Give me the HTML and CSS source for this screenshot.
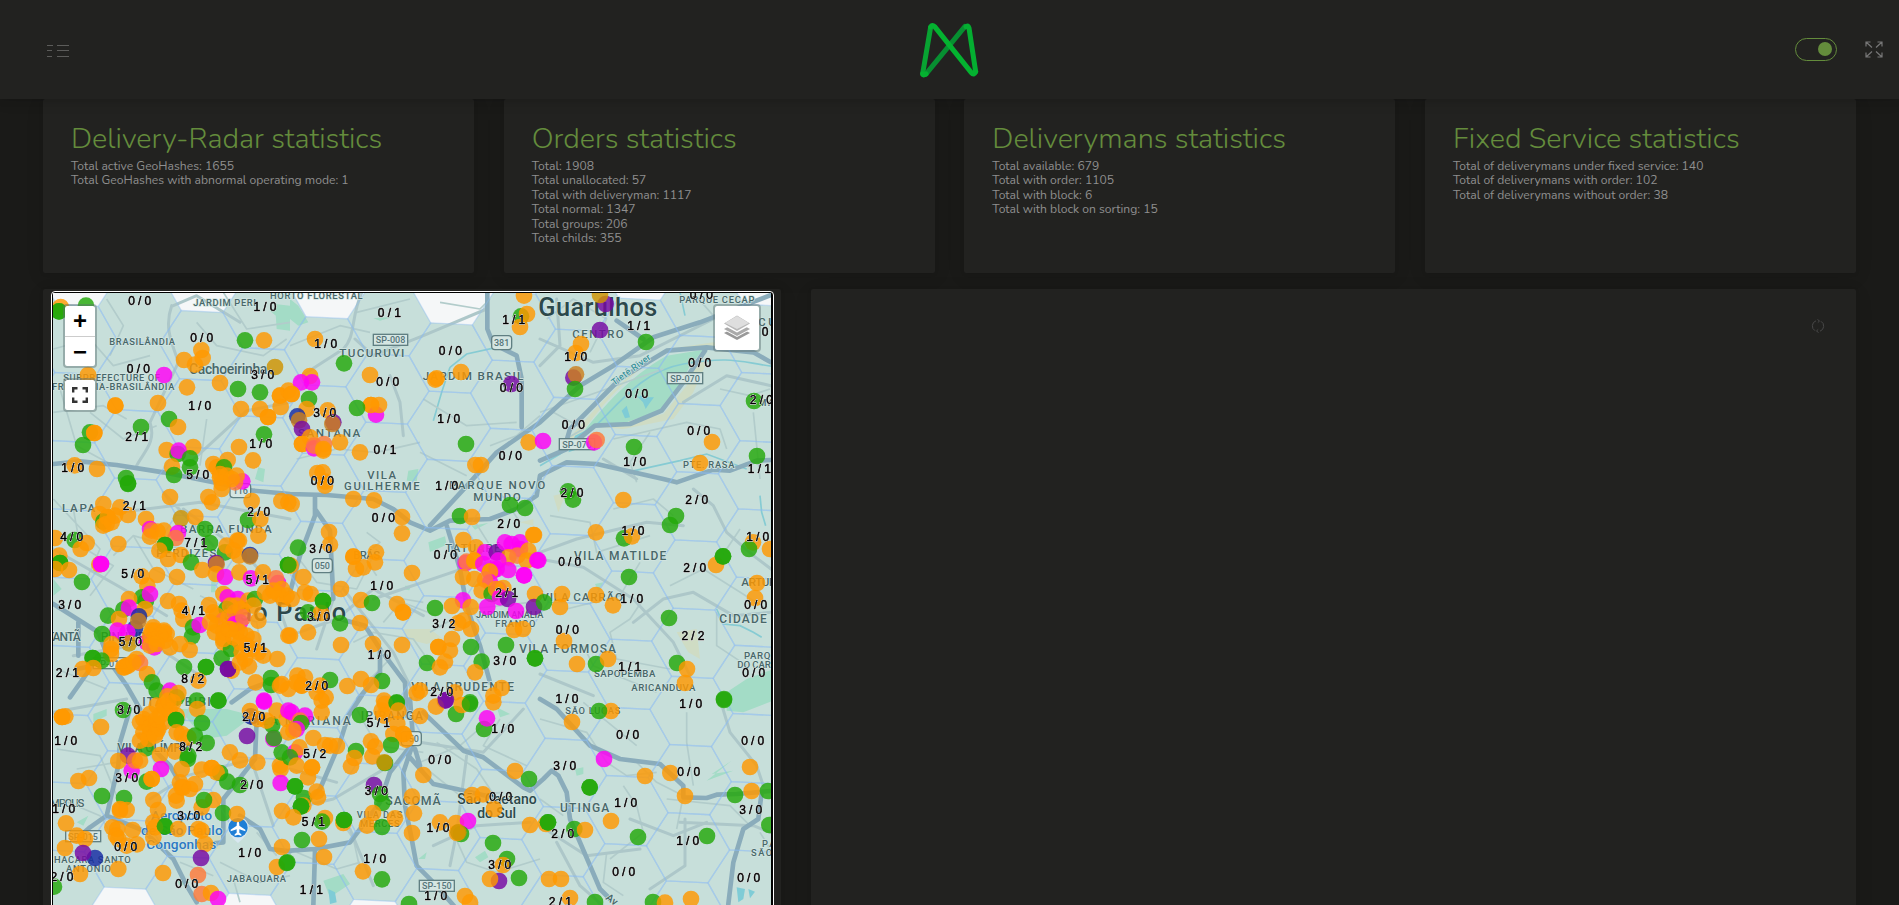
FILE: index.html
```html
<!DOCTYPE html>
<html lang="en">
<head>
<meta charset="utf-8">
<title>Delivery radar</title>
<link rel="stylesheet" href="styles.css">
</head>
<body>
<header class="topbar">
  <svg class="icon-menu" width="24" height="16" viewBox="0 0 24 16"><path d="M1 3.500h6M11 3.500h12M1 8.500h5M11 8.500h12M1 14.500h5M11 14.500h12"/></svg>
  <svg class="logo" width="60" height="58" viewBox="0 0 180 174">
    <path d="M135 19 L17 163" stroke="#078f31"/>
    <path d="M8 161 L32 21" stroke="#08a332"/>
    <path d="M138 20 Q144 14 147 24 L167 155" stroke="#04ae31"/>
    <path d="M8 161 Q9 168 18 162" stroke="#04b230"/>
    <path d="M32 21 Q36 13 44 20 L154 158 Q162 168 167 155" stroke="#04b230"/>
  </svg>
  <div class="topbar-actions">
    <span class="toggle"><i></i></span>
    <svg class="icon-full" width="18" height="17" viewBox="0 0 18 17"><path d="M1 5.500V1h4.500M1 1l6 5.500M12.500 1H17v4.500M17 1l-6 5.500M1 11.500V16h4.500M1 16l6-5.500M12.500 16H17v-4.500M17 16l-6-5.500"/></svg>
  </div>
</header>
<main class="page">
  <section class="stats">
    <article class="card stat"><h2>Delivery-Radar statistics</h2>
      <p>Total active GeoHashes: 1655</p><p>Total GeoHashes with abnormal operating mode: 1</p></article>
    <article class="card stat"><h2>Orders statistics</h2>
      <p>Total: 1908</p><p>Total unallocated: 57</p><p>Total with deliveryman: 1117</p><p>Total normal: 1347</p><p>Total groups: 206</p><p>Total childs: 355</p></article>
    <article class="card stat"><h2>Deliverymans statistics</h2>
      <p>Total available: 679</p><p>Total with order: 1105</p><p>Total with block: 6</p><p>Total with block on sorting: 15</p></article>
    <article class="card stat"><h2>Fixed Service statistics</h2>
      <p>Total of deliverymans under fixed service: 140</p><p>Total of deliverymans with order: 102</p><p>Total of deliverymans without order: 38</p></article>
  </section>
  <section class="panels">
    <div class="card map-card">
      <div class="map">
        <svg id="map" width="718" height="620" viewBox="159 882 2154 1860"></svg>
        <div class="zoom"><span>+</span><span>−</span></div>
        <div class="fit"><svg width="16" height="16" viewBox="0 0 16 16"><path d="M1.200 5.500V1.200H5.500M10.500 1.200h4.300v4.300M14.800 10.500v4.300h-4.300M5.500 14.800H1.200v-4.300"/></svg></div>
        <div class="layers"><svg width="26" height="26" viewBox="0 0 26 26"><path d="M0 18l13-7 13 7-13 7z" fill="#999"/><path d="M0 15l13-7 13 7-13 7z" fill="#fff"/><path d="M0 14l13-7 13 7-13 7z" fill="#aaa"/><path d="M0 10.500l13-7 13 7-13 7z" fill="#fff"/><path d="M0 8.500l13-8 13 8-13 7.500z" fill="#b9b9b9"/><path d="M1 8l12-7 12 7-12 6z" fill="#dedede"/></svg></div>
      </div>
    </div>
    <div class="card side">
      <svg class="icon-refresh" width="14" height="14" viewBox="0 0 14 14"><path d="M5 1.800A5.500 5.500 0 0 0 4 11.700M9 12.200A5.500 5.500 0 0 0 10 2.300M6.500 .5L8.500 2 6.800 3.600M7.500 13.500L5.500 12l1.700-1.600"/></svg>
    </div>
  </section>
</main>
<script src="map.js"></script>
</body>
</html>
```
FILE: styles.css
```css
* { box-sizing: border-box; }
body { margin: 0; height: 905px; overflow: hidden; background: #1a1a18; font-family: "Nunito", "Lato", sans-serif; color: #8f8f8f; }
.topbar { position: relative; z-index: 5; height: 99px; background: #222220; box-shadow: 0 1px 15px rgba(0,0,0,.1), 0 1px 8px rgba(0,0,0,.1); display: grid; grid-template-columns: 1fr 60px 1fr; align-items: center; padding: 0 16px 0 46px; }
.topbar svg { fill: none; display: block; }
.icon-menu { stroke: #5c5c5a; stroke-width: 1; }
.topbar .logo { stroke-width: 15; stroke-linecap: round; stroke-linejoin: round; margin: -1px 0 0 -15px; }
.topbar-actions { display: flex; justify-content: flex-end; align-items: center; gap: 28px; padding-bottom: 1px; }
.toggle { width: 42px; height: 23px; border: 1px solid #648c3c; border-radius: 12px; display: flex; justify-content: flex-end; align-items: center; padding-right: 4px; }
.toggle i { width: 14px; height: 14px; border-radius: 50%; background: #648c3c; }
.icon-full { stroke: #777; stroke-width: 1.2; }
.page { padding: 0 43px; }
.stats { display: grid; grid-template-columns: repeat(4, 431px); justify-content: space-between; height: 174px; }
.card { background: #222220; border-radius: 2px; box-shadow: 0 4px 20px 1px rgba(0,0,0,.06), 0 1px 4px rgba(0,0,0,.08); }
.stat { padding: 20px 28px; }
.stat h2 { margin: 0; height: 40px; font-size: 28.8px; line-height: 39px; font-weight: 300; color: #648c3c; white-space: nowrap; }
.stat p { margin: 0; font-size: 12.13px; line-height: 14.4px; white-space: nowrap; }
.panels { display: flex; gap: 30px; margin-top: 16px; }
.map-card { width: 738px; height: 660px; padding: 2px 7px 0 8px; }
.map { position: relative; width: 723px; height: 650px; border: 1px solid #fff; border-radius: 4px; background: #000; padding: 1px; overflow: hidden; }
#map { display: block; }
.zoom, .fit, .layers { position: absolute; background: #fff; border: 2px solid rgba(90,110,110,.45); background-clip: padding-box; border-radius: 4px; }
.zoom { left: 11px; top: 12px; width: 34px; font: bold 24px/29px "Liberation Sans", sans-serif; color: #000; text-align: center; }
.zoom span { display: block; height: 30px; }
.zoom span + span { border-top: 1px solid #ccc; }
.fit { left: 11px; top: 86px; width: 34px; height: 34px; display: grid; place-items: center; }
.fit path { fill: none; stroke: #333; stroke-width: 2.400; }
.layers { right: 12px; top: 12px; width: 48px; height: 48px; display: grid; place-items: center; }
.side { width: 1045px; height: 660px; padding: 30px 31px; display: flex; justify-content: flex-end; }
.icon-refresh { fill: none; stroke: #484848; stroke-width: 1; }

.hex { fill: #c7dfda; }
.hex-line { fill: none; stroke: #8bbcf0; stroke-width: 4; stroke-opacity: .4; }
.park { fill: #a3dcc6; }
.sand { fill: #cfdcc4; }
.water { fill: none; stroke: #86cbd3; stroke-width: 5; }
.lake { fill: #7fccd6; }
.street { fill: none; stroke: #b2cccb; stroke-width: 5; stroke-linejoin: round; }
.avenue { fill: none; stroke: #adc7c9; stroke-width: 9; stroke-linejoin: round; stroke-linecap: round; }
.highway { fill: none; stroke: #8aacbb; stroke-width: 14; stroke-linejoin: round; stroke-linecap: round; }
.place { font-family: "Roboto", sans-serif; fill: #486769; font-weight: 500; stroke: #d3e6e2; stroke-width: 4; paint-order: stroke; }
.place.city { fill: #2c484b; }
.place.airport { fill: #2b79c4; }
.shield { fill: #d5e6e3; stroke: #607f82; stroke-width: 4; }
.shield-text { font: 500 27px "Roboto", sans-serif; fill: #55757a; }
.dot { fill-opacity: .82; }
.count { font: 36px "Liberation Sans", sans-serif; fill: #000; stroke: #000; stroke-width: 1.6; text-anchor: middle; filter: drop-shadow(0 0 2px #fff) drop-shadow(0 0 2px #fff) drop-shadow(0 0 1px #fff); }
```
FILE: map.js
```js
const svg = document.getElementById('map');
const NS = 'http://www.w3.org/2000/svg';
const add = (tag, attrs, text) => {
  const el = document.createElementNS(NS, tag);
  for (const k in attrs) el.setAttribute(k, attrs[k]);
  if (text !== undefined) el.textContent = text;
  svg.appendChild(el);
  return el;
};
// Origins of the nine map sectors.
const origins = [[120,840],[870,840],[1620,840],[120,1470],[870,1470],[1620,1470],[120,2100],[870,2100],[1620,2100]];

// Hexagonal service cells on a sheared lattice.
const empty = ['0,-1','-2,0','-4,1','-6,2','3,-3','5,-4','-5,11','-3,10','-1,9'];
const U = [184.5, 111.6], V = [-5.2, 204.6], C = [1352, 1077];
add('rect', {x: 150, y: 870, width: 2180, height: 1880, fill: '#f5f7f8'});
const cells = [];
for (let i = -8; i < 8; i++) for (let j = -12; j < 16; j++) {
  if (empty.includes(i + ',' + j)) continue;
  const x = C[0] + i * U[0] + j * V[0], y = C[1] + i * U[1] + j * V[1];
  if (x < 0 || x > 2450 || y < 780 || y > 2850) continue;
  cells.push([[1,1],[-1,2],[-2,1],[-1,-1],[1,-2],[2,-1]]
    .map(([a, b]) => (x + (a*U[0] + b*V[0]) / 3).toFixed(1) + ',' + (y + (a*U[1] + b*V[1]) / 3).toFixed(1)).join(' '));
}
cells.forEach(points => add('polygon', {class: 'hex', points}));

// [sector, class, path]
const shapes = [
  [0,'park','M705 75l45 5v75l-40-5zM655 565l20 5-5 40-25-10zM690 95l40-10-5 40z'],
  [1,'park','M0 60l25 20 30 50-30 10-25-20zM355 575l30-5-5 40-30-5zM250 118l60-5-40 12z'],
  [2,'sand','M100 500 C170 390 300 240 420 205 L520 190 590 200 480 205 380 215 C270 270 160 390 60 510zM180 445 L370 405 440 320 470 240 500 250 460 340 400 420 250 450z'],
  [2,'park','M100 500 C170 400 270 290 380 230 L490 212 450 260 420 320 370 390 260 430 160 440z'],
  [2,'lake','M105 470l40-20-30 60-30 10zM245 395l15-15 10 35-15 3zM290 350l8 5 12-20 2 20 30 0-15 20-10 15-8-20z'],
  [3,'park','M515 240l12 0 0 70-14 0zM40 270l25 30-25 20z'],
  [4,'park','M415 160l50-18 5 25-50 22zM545 110l50-8-40 20zM345 290l18 0-5 14-12-2z'],
  [4,'sand','M340 420l80 0 40 30-50 15-60-15zM690 100l40-10 0 20z'],
  [5,'park','M165 285l25-5-15 25zM560 610l60-40 80-30v90H560z'],
  [5,'sand','M410 430l60-10 10 90-35-20zM40 20l40-10-25 60z'],
  [6,'park','M420 30l140 0 80 20-80 60-70 10zM160 45l40-15 0 20-40 20zM110 370l35-20-15 30zM410 540l40 10-30 10z'],
  [6,'sand','M510 400l40 0-10 50-40 0zM450 190l60 20-50 15z'],
  [7,'park','M100 545l60-20 20 30-60 40zM555 475l30-20 10 20-25 15zM385 480l25-20-5 20zM620 25l40 20-30 10z'],
  [8,'park','M560 0h140v5l-90 35-50-5zM105 210l25-5 0 20-20 5zM500 245l75-60-60 40 65-10z'],
  [8,'lake','M590 565l25 5-5 30-15 10zM625 570l20 8-15 20z'],
  [7,'lake','M115 570l20 10 5 30-20 5z'],
  [2,'water','M0 560 L60 525 130 470 C200 430 280 280 430 255 S600 250 700 262M420 40l15 70M260 580l160-35 80-20 120 45'],
  [1,'water','M480 265 L530 225 620 205M480 265 l-25 75-25 85'],
  [5,'water','M660 20l5 50 12 40M530 360l20 45 50 5 40 20 25 15'],
  [0,'street','M40 210 L150 180 220 260 330 230M470 130 L530 200 670 230 740 180M40 400 L190 380 260 420M500 420 L480 560M60 330 L110 500 220 560M200 60l50 80-40 90M550 40l70 110 130-20M150 400l100 80 100-40'],
  [1,'street','M0 200 L150 140 240 160M400 360 L530 440 680 430M200 100 L360 60M20 540 L140 510 260 520 390 490M390 520L530 590M600 500l80-30 70-60M450 70l120 20 30-30'],
  [2,'street','M0 400l200-70 170-60M220 480 L440 430 540 450 560 510M20 120l80-60 100 60-50 100M540 330l90 20 60-20M450 30l70 80M0 430l40-30 90 50-70 40M640 400l20 200M330 460l-60 90 20 60'],
  [3,'street','M40 30 L180 180 140 270M280 140l60 100 120 60M100 60l20 110 100 60-70 90M480 320 L650 400 670 520M50 540l150 60M220 200l60-60 140 40'],
  [4,'street','M20 200l60 80 120 20 60-120M230 130l40 30-50 40 40 60M260 310l180 70M280 400l60-70 60 10M420 430l120-70 180-20M250 450l50 60-70 70M550 90l50 80 140 30M630 10l60 90M190 460l60-30 120 20 70 100'],
  [5,'street','M30 80l120 20 20 90 160-50M220 60l120-30 60 50M80 360l160-40 60-100M310 330l-40 60-60 40 20 80 160 30M130 470l30 60 190 80M390 290l100-50 190 120M530 370v100l90 60M600 120l-60 90'],
  [6,'street','M50 150l130 20 50 120M60 300l120 50 60 100M420 490l100 40M540 490l120 60 90-20M450 20l-40 110M650 400l60 70M110 210l120-20M580 540l20 70'],
  [7,'street','M20 460l120 50 70-20M200 30l60 110 140 20M410 210l100 80 130-10M390 190l120-50 80-70M480 380l50 110 90 30 130-40M630 60l-50 80 130 60M150 360l40 60 20 90M440 130l120 80 80 120'],
  [8,'street','M0 60l140 40 60 90 60 40 90-10M250 260l40 60 20 80-100 80M440 40l0 90 20 130M290 190l60 60 80 40-20 100M200 460l-10 90 60 40M660 400l30 50M130 10l160 130M380 300l190 20 60 60M0 300l70 50'],
  [0,'avenue','M395 80 C370 150 400 200 415 250 L330 430 C350 490 310 520 290 560M440 560 L620 395 750 370M400 80 L470 50 600 130'],
  [1,'avenue','M220 30 C180 110 200 170 160 210 L20 300M300 290 L330 370 340 470M195 180 L250 230 400 170 590 90'],
  [2,'avenue','M50 60 L60 200 0 260M0 180 L160 250 300 230 520 120M430 370 L560 290 693 320M190 540 L290 600'],
  [3,'avenue','M40 180 L250 300 380 380M430 60 L620 200 690 280 740 420M370 10 L520 170M100 500 L330 460 480 560M240 70 L480 40 750 90'],
  [4,'avenue','M120 120 L130 330 80 480M250 330 L530 235 750 190M0 440 L140 390 250 300 400 380M160 300 L310 490 380 630'],
  [5,'avenue','M0 190 L110 150 320 100 430 110M460 0 L520 50 560 130 640 200 693 240M0 210 L130 235 280 330 400 460 450 560M280 400 L370 330 460 310 580 380 693 370M0 555 L160 620'],
  [6,'avenue','M40 40 L260 0M330 300 L440 230 640 180M640 200 L700 380'],
  [7,'avenue','M0 330 L130 300 300 200M430 440 L560 380 720 370M390 130 L580 160 700 30M530 170 L500 400 480 500M180 390 L250 560M0 210L140 250'],
  [8,'avenue','M540 0 L570 100 650 200 670 260M50 430 L120 560 200 630M0 380 L140 470 300 450M420 370 L640 380 690 400M435 360 L435 500 330 570M270 360 L400 410 500 370'],
  [1,'highway','M592 30 V150 L610 195 680 230 695 300 695 360 695 445'],
  [3,'highway','M40 -75 L120 -83 230 -72 370 -50 520 -20 640 5 750 15 860 18 1000 30 1060 60 1110 100 1170 125 1230 95 1350 90 1430 60 1490 20 1500 -40 1580 -80 1670 -75 1870 -30 1910 -20 2020 -58 2070 -55 2150 -85 2260 -90'],
  [4,'highway','M420 110 L540 -20 620 -110 750 -200 870 -310 970 -370 1090 -455 1230 -500 1443 -582M980 -505 L1060 -450M75 25 L75 80 30 200 0 310M75 60L120 125 130 330M470 110 L510 240 530 350 570 470 600 580'],
  [2,'highway','M78 490 L90 450 240 300 380 215 500 205 640 220 693 250M0 545 L80 510 165 440 270 435 365 395 430 310 495 215'],
  [3,'highway','M40 345 L120 395 175 430 210 520 260 590 300 660M115 400V500M150 540L90 625M190 525L110 540M575 640L630 600 710 570'],
  [4,'highway','M150 390 L225 410 270 480 270 550 205 630M285 500 L345 580 350 680'],
  [6,'highway','M270 30 L240 130 235 200 200 350 150 385 110 420M200 350 L310 395 400 480 440 560 470 610M650 60 L645 180 550 300 550 430 500 435M600 350 L660 390 690 450 750 457M300 110 L390 200 430 270'],
  [7,'highway','M215 -10 L175 50 150 130 90 270 60 300M360 0 L370 130 340 220 345 320 365 420 380 500 430 550 500 630M0 455 L75 450 180 430 270 310 300 220 370 130M75 455 L70 620M355 170 L430 255 500 270 630 300M400 40 L520 155 580 175 700 265 720 275 760 240 785 215 805 230 830 280 840 360 900 500 930 570 960 600M375 150 L390 200'],
  [8,'highway','M0 0 L50 30 150 140 240 180 360 195 430 260 430 295 500 297 530 287 590 285 690 276M665 280 L655 360 610 390 580 490 565 615']
];
for (const [s, cls, d] of shapes) add('path', {class: cls, d, transform: `translate(${origins[s]})`});
cells.forEach(points => add('polygon', {class: 'hex-line', points}));

// [sector, left, baseline, width, size, text, kind]
const places = [
  [0,460,80,188,28,'JARDIM PERI'],[0,690,61,278,28,'HORTO FLORESTAL'],[0,208,199,197,28,'BRASILÂNDIA'],[0,447,285,235,42,'Cachoeirinha'],
  [0,70,307,290,28,'SUBPREFECTURE OF'],[0,36,334,367,28,'FREGUESIA-BRASILÂNDIA'],
  [1,148,235,195,35,'TUCURUVI'],[1,398,303,302,35,'JARDIM BRASIL'],[1,24,474,187,35,'SANTANA'],[1,232,600,86,34,'VILA'],[1,162,632,227,34,'GUILHERME'],[1,478,629,288,35,'PARQUE NOVO'],
  [2,-5,111,357,76,'Guarulhos','city'],[2,97,177,154,34,'CENTRO'],[2,418,73,225,28,'PARQUE CECAP'],[2,655,142,90,34,'CUM'],[2,429,568,154,28,'PTE. RASA'],[2,655,380,70,28,'MAR'],
  [3,66,70,100,35,'LAPA'],[3,420,131,275,35,'BARRA FUNDA'],[3,349,205,180,34,'PERDIZES'],[3,545,396,373,76,'São Paulo','city'],[3,-20,456,142,36,'BUTANTÃ'],[3,182,456,180,36,'PINHEIROS'],
  [4,550,35,142,35,'MUNDO'],[4,466,190,165,34,'TATUAPÉ'],[4,190,211,80,34,'BRÁS'],[4,558,388,202,28,'JARDIM ANÁLIA'],[4,616,414,120,28,'FRANCO'],[4,364,606,308,36,'VILA PRUDENTE'],
  [5,102,214,277,36,'VILA MATILDE'],[5,4,336,245,35,'VILA CARRÃO'],[5,604,292,170,35,'ARTUR ALV'],[5,538,402,142,36,'CIDADE'],[5,612,510,100,29,'PARQU'],[5,592,537,145,29,'DO CARMO'],[5,-62,492,290,36,'VILA FORMOSA'],[5,162,565,184,29,'SAPOPEMBA'],[5,274,607,192,29,'ARICANDUVA'],
  [6,307,22,205,36,'ITAIM BIBI'],[6,232,160,225,36,'VILA OLÍMPIA'],[6,-50,324,183,34,'MORUMPOLIS'],[6,22,492,250,28,'CHACARA SANTO'],[6,78,520,135,28,'ANTONIO'],[6,333,364,183,41,'Aeroporto','airport'],[6,303,408,245,41,'de São Paulo','airport'],[6,319,450,210,41,'Congonhas','airport'],[6,560,550,178,28,'JABAQUARA'],
  [6,620,79,312,36,'VILA MARIANA'],[7,212,64,187,36,'IPIRANGA'],[7,286,319,166,37,'SACOMÃ'],[7,200,357,137,28,'VILA DAS'],[7,210,384,119,28,'MERCES'],[7,502,316,238,42,'São Caetano','city'],[7,562,358,116,42,'do Sul','city'],
  [8,76,46,165,28,'SÃO LUCAS'],[8,60,340,148,36,'UTINGA'],[8,666,445,90,28,'PARQ'],[8,633,472,120,28,'SÃO RA']
];
for (const [s, x, y, w, size, text, kind = ''] of places)
  add('text', {class: 'place ' + kind, x: origins[s][0] + x, y: origins[s][1] + y, 'font-size': size, textLength: w}, text);
add('text', {class: 'place', 'font-size': 28, style: 'fill:#3c939c', transform: 'translate(1843 1160) rotate(-36)', textLength: 138}, 'Tietê River');
add('text', {class: 'place', 'font-size': 32, transform: 'translate(1815 2700) rotate(35)'}, 'Av.');

const shields = [[1,250,166,103,'SP-008'],[1,605,170,60,'381'],[2,382,281,106,'SP-070'],[2,58,479,106,'SP-070'],[4,67,209,60,'050'],[6,77,395,105,'SP-015'],[7,388,544,105,'SP-150'],[3,160,506,98,'SP-015'],[3,570,-16,62,'116'],[7,334,98,60,'150']];
for (const [s, x, y, w, text] of shields) {
  const X = origins[s][0] + x, Y = origins[s][1] + y, h = w < 80 ? 42 : 33;
  add('rect', {class: 'shield', x: X, y: Y, width: w, height: h, rx: w < 80 ? 10 : 0});
  add('text', {class: 'shield-text', x: X + w / 2, y: Y + h / 2 + 10, 'text-anchor': 'middle'}, text);
}
add('path', {d: 'M682 2486 a32 32 0 1 1 64 0 q-2 22-32 46q-30-24-32-46z', fill: '#d8e8f0'});
add('circle', {cx: 714, cy: 2486, r: 29, fill: '#1f7fd6'});
add('path', {d: 'M714 2466q4 2 4 14l18 12v5l-18-6v10l6 5v4l-10-3-10 3v-4l6-5v-10l-18 6v-5l18-12q0-12 4-14z', fill: '#fff'});

const colors = {o: '#ff9800', g: '#23a80a', m: '#ff00f5', p: '#7608a2', b: '#152ba2', y: '#cf9400', r: '#ff7a38', k: '#cc801d'};
const dots = [
 'o62,84 g57,97 g57,97 g138,80 g615,184 o672,184 o484,213 o432,243 o488,237 o465,257 m372,288 y705,264 o144,288 o441,325 o540,312 g594,330 g660,340 o720,350 o720,350 o745,335 o722,384 o603,390 o660,390 o684,414 o684,414 o226,380 o226,380 o354,372 g387,420 o414,444 g303,444 g150,460 o163,462 o163,462 g129,498 g672,466 o380,513 o460,504 g413,525 m416,515 o396,563 g450,538 g450,565 g402,588 o597,504 o639,544 o563,543 o520,555 o530,565 g552,565 o540,585 o540,595 o560,590 m607,607 o590,590 r585,610 o575,600 o545,612 o104,559 o171,570 g258,597 g264,613',
 'o75,180 g162,253 o240,288 o60,291 m33,310 m66,310 g57,360 o5,345 o5,345 o50,390 b22,412 k27,424 p36,450 o113,394 p130,430 k127,435 o243,378 m258,407 o243,378 o267,378 g201,387 o210,520 o150,490 o36,495 o36,495 o60,475 m72,508 r72,500 r102,495 o100,515 o100,510 o82,582 o98,580 o105,608 o702,50 g693,112 o711,105 o690,144 o440,298 o436,302 o513,279 p664,315 g528,495 o556,558 o573,558 o716,490',
 'p197,75 y180,48 p180,153 o123,195 o107,222 p100,296 k108,286 g105,330 g318,189 m9,486 m162,490 r170,483 g282,504 o516,489 o480,552 g651,531 g642,366 g84,637',
 'o190,45 g264,-15 o390,24 o505,24 o516,40 o545,0 o635,36 o724,36 o745,40 o178,75 o240,55 o264,78 o203,85 g190,98 o203,85 o200,105 o190,110 o215,100 o225,80 o318,90 m330,120 r335,125 o353,128 o330,143 y423,88 o466,84 g495,120 o372,125 m414,132 r407,147 g510,162 g375,168 g375,168 o358,185 o384,210 o423,198 g453,220 g555,190 o560,170 o592,155 o597,155 o580,185 o597,200 o655,140 g624,93 o661,90 b630,198 k630,202 o487,243 p528,222 k530,226 o528,255 m555,264 o411,264 o351,258 o305,262 o322,290 o598,250 m633,268 o669,250 m714,282 r708,268 g744,228 g744,228 o45,147 g104,153 o140,162 o122,180 o235,165 o58,200 g60,222 g60,222 o87,243 o45,240 o178,226 m183,225 m183,225 g126,279 g306,325 g318,335 m330,315 o267,330 g250,362 m267,356 g204,380 o237,390 o315,360 b297,382 b285,418 k295,396 m232,425 m262,430 g186,435 o384,336 o417,345 o425,365 o430,390 o507,348 g459,415 g456,442 m479,408 o420,465 o449,483 o390,475 m320,460 m343,475 o330,470 o335,425 o340,415 o345,425 o372,425 o372,430 o330,440 o350,450 o375,455 o380,435 o360,440 o350,465 y267,463 o213,480 o213,495 o215,465 o265,530 o250,535 o260,530 o290,510 o254,535 r300,522 o280,520 o321,555 g158,507 g158,507 g185,515 o128,540 o160,537 g336,580 g350,605 m390,605 o382,622 g410,625 o415,612 g432,534 g498,534 g498,534 o475,575 g545,508 o575,545 o550,460 g573,480 p564,540 p564,540 o647,580 o627,532 o670,500 o712,510 g693,567 g693,588 o725,585 o720,590 o745,600 m672,635 o550,315 m563,325 m594,330 o625,335 o590,350 o520,370 g560,360 o530,380 r550,395 o565,385 r585,370 o602,360 o570,350 m600,400 m585,405 r610,385 g645,330 o640,350 o690,320 o675,310 o715,315 o730,330 o740,320 o725,300 o700,305 o655,395 o525,430 o530,410 o550,430 o550,450 o565,420 o590,425 o580,445 o600,430 o620,440 o600,460 o640,450 o620,470 o605,490 o600,520 o615,510 o510,400 o635,480 o655,490 o570,420 o745,440 g470,635 g535,635',
 'o190,30 o252,34 o336,84 o336,133 o105,-10 o117,129 o120,167 g24,176 o2,230 o5,45 g-5,228 o40,264 o45,310 o62,315 o153,300 g99,336 g54,370 o93,372 g99,336 g150,403 o54,430 o5,330 o0,440 o190,203 o190,203 o198,240 o220,235 o258,190 o255,220 o213,333 g246,342 o321,345 o339,370 o339,370 o366,252 o210,402 o249,465 o336,468 o153,468 g120,573 o45,565 o22,560 o35,590 o35,590 o20,580 o90,590 o107,625 o80,610 o172,591 o213,570 g276,576 o243,588 o282,635 g320,640 g510,81 o546,84 g660,48 g705,57 o732,138 o520,153 o558,175 m585,190 m527,222 r530,218 o553,215 o553,215 m580,225 p620,190 m645,160 m690,160 m665,165 m690,180 o715,185 o655,205 r682,200 o710,215 m625,215 m655,243 m610,245 o600,248 m620,240 o600,248 m702,259 m702,259 m742,214 m600,280 r585,272 o519,264 o553,270 o575,305 g605,315 m625,300 o618,300 o640,297 o735,315 m519,334 m592,354 m630,325 p654,330 m678,366 p732,354 g435,357 o486,351 o542,354 o520,395 o543,420 o505,402 o672,423 o699,420 g543,474 o486,450 o445,474 o445,474 o480,485 o465,518 g411,522 o450,535 g575,518 g648,468 g735,508 o555,550 o380,612 o390,605 o495,610 p465,635 g540,640 o610,620 o635,597',
 'g99,32 o250,33 o168,130 g252,148 o276,142 g408,81 g390,108 m-5,214 o-20,138 o528,228 g549,202 g549,202 o639,160 g627,180 o690,180 g267,264 g12,340 o66,315 o60,354 o168,318 o219,349 o72,456 g387,387 g411,522 o441,540 o435,582 o111,525 g168,525 o204,510 o651,282 o645,327 g552,630 g-15,508',
 'o66,54 o76,52 o66,54 o183,84 g249,33 o350,20 o370,20 o400,10 o330,45 o310,60 o300,70 o320,75 o330,85 o330,85 o350,75 o370,70 o355,90 o350,100 o330,105 o310,100 g318,148 o300,125 o325,120 o345,110 o350,60 o360,50 o375,25 o385,5 o390,35 o410,50 g408,63 g408,63 o410,100 o425,105 o445,115 o472,30 g486,72 g465,110 g500,132 o405,158 o360,168 g443,180 g445,170 o425,210 m275,215 p264,170 o235,186 r285,185 o300,185 m363,210 g320,248 o335,240 o335,240 o115,246 o147,237 g186,291 g252,297 o240,335 o240,330 o260,333 o340,303 o354,333 o410,305 o408,290 o420,250 o425,265 o430,265 o450,270 o465,255 o485,212 o515,207 g540,222 o515,207 o530,220 g562,248 g600,258 o570,160 o600,184 o652,190 o720,200 o722,210 g725,160 m722,252 o520,303 o485,325 g492,303 g549,342 o591,345 o78,373 o110,410 o135,420 o75,447 b165,477 p129,462 o217,385 o232,390 o228,410 o278,393 o291,436 o235,420 o260,440 o340,370 g375,382 o345,385 g375,382 o415,390 o340,415 o475,390 o485,395 o495,435 p483,477 o235,510 o369,522 o120,525 g42,563 r474,528 r485,585 o513,582 m534,600 o726,336 o726,444 o711,504 g740,492 b633,52 o630,36 o655,60 g697,78 o680,65 o710,35 m672,8 p621,111 m700,120 g702,117 o740,60 m745,35 g535,5 o745,100',
 'o95,40 o95,5 m5,40 m45,50 r30,65 g33,72 m20,90 o10,95 m15,160 o28,145 o70,117 o105,138 o120,140 o141,141 g0,175 o20,200 o66,205 o66,205 o54,235 g15,262 g15,262 g42,297 o40,320 g33,322 g33,322 o80,278 o84,295 o10,355 g36,423 o87,420 o102,474 o105,357 g96,368 o160,372 g162,363 g162,363 g-8,490 g210,48 o275,35 o285,15 g320,12 o325,35 o282,50 o322,75 o310,105 o340,105 o340,105 o348,122 g303,138 o243,127 o255,143 o247,172 g198,156 o193,177 o183,202 g285,192 y283,190 p252,258 g270,285 g277,312 o366,293 o372,343 o249,342 o231,380 g276,384 o315,358 o366,402 o400,228 o219,517 g276,541 g357,615 o390,51 o438,23 p468,3 g498,45 o515,18 g540,15 o610,10 g582,90 m591,58 o675,216 g717,240 o546,288 o579,286 o612,330 o450,370 o498,372 m534,366 g513,405 o501,402 y505,400 g609,432 g651,480 o639,498 p627,546 o600,540 g687,537 o720,378 o525,591 o540,610',
 'o213,36 g177,36 o96,69 m192,180 o315,231 o391,222 o435,291 g149,265 g149,265 o18,375 g24,370 g24,370 g103,390 o135,393 o213,366 g294,414 g501,411 g585,288 o635,276 g684,276 g688,378 o630,204 g552,3 o27,540 o63,540 o90,597 g165,609 g339,609 o375,611 o453,600'
];
dots.forEach((list, s) => list.split(' ').forEach(d => {
  const [x, y] = d.slice(1).split(',').map(Number);
  add('circle', {class: 'dot', cx: origins[s][0] + x, cy: origins[s][1] + y, r: 25, fill: colors[d[0]]});
}));

const counts = [
 '0/0@299,66 1/0@675,84 0/0@485,177 0/0@295,270 3/0@668,288 1/0@479,381 2/1@290,474 1/0@662,494 1/0@98,567 5/0@473,588',
 '0/1@298,101 1/0@107,194 0/0@481,215 1/1@671,123 0/0@293,308 0/0@664,326 3/0@104,402 1/0@476,419 0/1@285,513 0/0@661,531 0/0@97,605 1/0@470,621',
 '0/0@484,48 1/1@296,140 0/0@700,158 1/0@107,234 0/0@479,251 0/0@290,345 2/0@664,362 0/0@100,437 0/0@476,455 1/0@284,548 1/1@658,570 2/0@96,642',
 '2/1@283,50 2/0@656,69 4/0@95,144 7/1@467,161 5/0@278,255 5/1@652,272 3/0@89,348 4/1@460,366 5/0@271,459 5/1@646,477 2/1@82,552 8/2@458,570',
 '0/0@280,87 2/0@656,104 3/0@92,180 0/0@466,197 1/0@275,291 2/1@650,312 3/0@86,384 3/2@461,404 1/0@268,498 3/0@644,515 2/0@80,590 2/0@455,608',
 '2/0@470,33 1/0@279,126 1/0@653,144 0/0@89,219 2/0@464,237 1/0@275,329 0/0@647,347 0/0@82,423 2/2@459,440 1/1@269,534 0/0@641,551 1/0@81,628 1/0@452,714',
 '3/0@266,32 2/0@641,54 1/0@77,126 8/2@452,144 3/0@260,237 2/0@635,258 1/0@71,328 3/0@446,351 0/0@257,443 1/0@629,462 2/0@66,533 0/0@440,554',
 '5/1@265,71 1/0@638,90 5/2@74,165 0/0@449,183 3/0@259,275 0/0@632,294 5/1@70,368 1/0@444,387 1/0@254,480 3/0@629,498 1/1@64,573 1/0@437,591',
 '0/0@263,107 0/0@638,126 3/0@74,201 0/0@446,219 1/0@257,312 3/0@632,333 2/0@68,405 1/0@443,426 0/0@251,519 0/0@626,537 2/1@61,609'
];
// The last row of sector 5 sits on the border with sector 8.
counts[5] = counts[5].replace(' 1/0@452,714', ' 1/0@452,645');
counts.forEach((list, s) => list.split(' ').forEach(c => {
  const [value, pos] = c.split('@'), [x, y] = pos.split(',').map(Number);
  add('text', {class: 'count', x: origins[s][0] + x, y: origins[s][1] + y + 13, textLength: 69}, value.replace('/', ' / '));
}));
```
